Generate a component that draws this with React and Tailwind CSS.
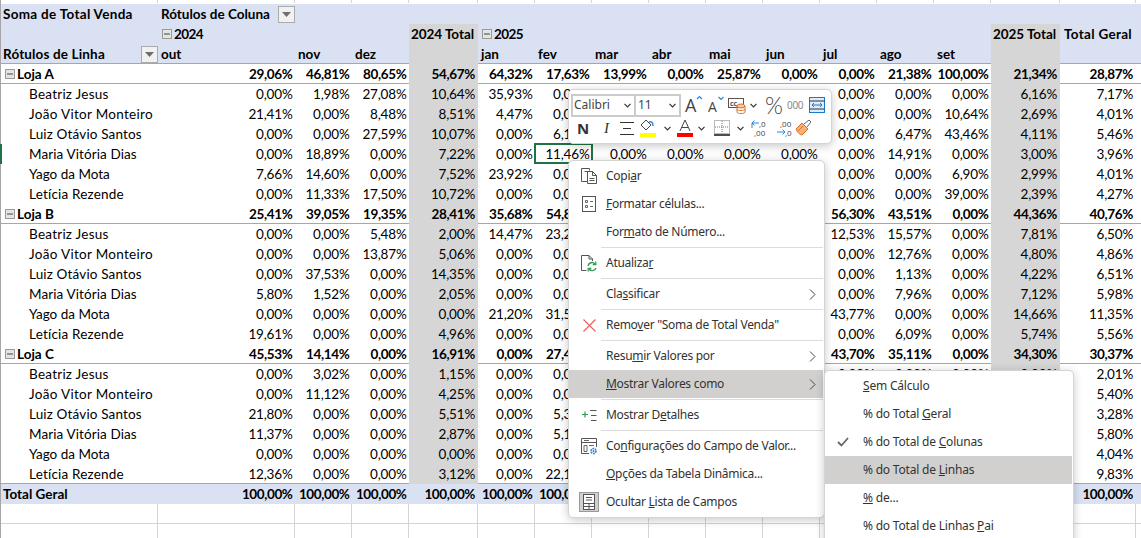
import React from "react";

const COLS = "grid grid-cols-[157px_137px_57px_57px_69px_57px_57px_57px_57px_57px_57px_57px_57px_57px_69px_76px]";
const TOTALS = [3, 13];

const TRACK = {
  "Beatriz Jesus": "tracking-[0.25px]",
  "João Vitor Monteiro": "tracking-[0.3px]",
  "Luiz Otávio Santos": "tracking-[0.15px]",
  "Maria Vitória Dias": "tracking-[0.1px]",
  "Yago da Mota": "tracking-[0px]",
  "Letícia Rezende": "tracking-[0.2px]",
};

const rows = [
  ["g", "Loja A", "29,06 46,81 80,65 54,67 64,32 17,63 13,99 0,00 25,87 0,00 0,00 21,38 100,00 21,34 28,87"],
  ["c", "Beatriz Jesus", "0,00 1,98 27,08 10,64 35,93 0,00 0,00 0,00 0,00 0,00 0,00 0,00 0,00 6,16 7,17"],
  ["c", "João Vitor Monteiro", "21,41 0,00 8,48 8,51 4,47 0,00 0,00 0,00 0,00 0,00 0,00 0,00 10,64 2,69 4,01"],
  ["c", "Luiz Otávio Santos", "0,00 0,00 27,59 10,07 0,00 6,17 0,00 0,00 0,00 0,00 0,00 6,47 43,46 4,11 5,46"],
  ["c", "Maria Vitória Dias", "0,00 18,89 0,00 7,22 0,00 11,46 0,00 0,00 0,00 0,00 0,00 14,91 0,00 3,00 3,96"],
  ["c", "Yago da Mota", "7,66 14,60 0,00 7,52 23,92 0,00 0,00 0,00 0,00 0,00 0,00 0,00 6,90 2,99 4,01"],
  ["c", "Letícia Rezende", "0,00 11,33 17,50 10,72 0,00 0,00 0,00 0,00 0,00 0,00 0,00 0,00 39,00 2,39 4,27"],
  ["g", "Loja B", "25,41 39,05 19,35 28,41 35,68 54,87 0,00 0,00 0,00 0,00 56,30 43,51 0,00 44,36 40,76"],
  ["c", "Beatriz Jesus", "0,00 0,00 5,48 2,00 14,47 23,25 0,00 0,00 0,00 0,00 12,53 15,57 0,00 7,81 6,50"],
  ["c", "João Vitor Monteiro", "0,00 0,00 13,87 5,06 0,00 0,00 0,00 0,00 0,00 0,00 0,00 12,76 0,00 4,80 4,86"],
  ["c", "Luiz Otávio Santos", "0,00 37,53 0,00 14,35 0,00 0,00 0,00 0,00 0,00 0,00 0,00 1,13 0,00 4,22 6,51"],
  ["c", "Maria Vitória Dias", "5,80 1,52 0,00 2,05 0,00 0,00 0,00 0,00 0,00 0,00 0,00 7,96 0,00 7,12 5,98"],
  ["c", "Yago da Mota", "0,00 0,00 0,00 0,00 21,20 31,50 0,00 0,00 0,00 0,00 43,77 0,00 0,00 14,66 11,35"],
  ["c", "Letícia Rezende", "19,61 0,00 0,00 4,96 0,00 0,00 0,00 0,00 0,00 0,00 0,00 6,09 0,00 5,74 5,56"],
  ["g", "Loja C", "45,53 14,14 0,00 16,91 0,00 27,41 0,00 0,00 0,00 0,00 43,70 35,11 0,00 34,30 30,37"],
  ["c", "Beatriz Jesus", "0,00 3,02 0,00 1,15 0,00 0,00 0,00 0,00 0,00 0,00 0,00 0,00 0,00 0,00 2,01"],
  ["c", "João Vitor Monteiro", "0,00 11,12 0,00 4,25 0,00 0,00 0,00 0,00 0,00 0,00 0,00 0,00 0,00 0,00 5,40"],
  ["c", "Luiz Otávio Santos", "21,80 0,00 0,00 5,51 0,00 5,30 0,00 0,00 0,00 0,00 0,00 0,00 0,00 0,00 3,28"],
  ["c", "Maria Vitória Dias", "11,37 0,00 0,00 2,87 0,00 5,10 0,00 0,00 0,00 0,00 0,00 0,00 0,00 0,00 5,80"],
  ["c", "Yago da Mota", "0,00 0,00 0,00 0,00 0,00 0,00 0,00 0,00 0,00 0,00 0,00 0,00 0,00 0,00 4,04"],
  ["c", "Letícia Rezende", "12,36 0,00 0,00 3,12 0,00 22,10 0,00 0,00 0,00 0,00 0,00 0,00 0,00 0,00 9,83"],
];

const Minus = () => (
  <svg width="10" height="10" viewBox="0 0 10 10" className="shrink-0">
    <rect x="0.5" y="0.5" width="9" height="9" fill="#e4e4e4" stroke="#9a9a9a" />
    <path d="M2 5H8" stroke="#444" />
  </svg>
);

const Filter = () => (
  <span className="flex h-[17px] w-[17px] items-center justify-center border border-[#ababab] bg-[#f1f1f1]">
    <svg width="9" height="5" viewBox="0 0 9 5"><path d="M0 0H9L4.5 5Z" fill="#6e6e6e" /></svg>
  </span>
);

function HeaderRows() {
  const months = ["jan", "fev", "mar", "abr", "mai", "jun", "jul", "ago", "set"];
  return (
    <div className="border-b border-[#8ea9db] bg-[#d9e1f2] font-bold">
      <div className={`${COLS} h-5 items-center`}>
        <div className="pl-[2px] tracking-[0.3px]">Soma de Total Venda</div>
        <div className="col-span-2 flex w-[137px] items-center justify-between pl-[3px]">
          <span>Rótulos de Coluna</span>
          <Filter />
        </div>
      </div>
      <div className={`${COLS} h-5 items-center`}>
        <div />
        <div className="col-span-3 flex items-center gap-[2px] pl-[4px]"><Minus /><span className="tracking-[-0.6px]">2024</span></div>
        <div className="flex h-full items-center justify-end bg-[#d6d6d6] pr-[4px] tracking-[-0.05px]">2024 Total</div>
        <div className="col-span-9 flex items-center gap-[2px] pl-[4px]"><Minus /><span className="tracking-[-0.6px]">2025</span></div>
        <div className="flex h-full items-center justify-end bg-[#d6d6d6] pr-[4px] tracking-[-0.05px]">2025 Total</div>
        <div className="flex items-center justify-end pr-[4px] tracking-[0.3px]">Total Geral</div>
      </div>
      <div className={`${COLS} h-[19px] items-center`}>
        <div className="flex items-center justify-between pl-[2px]"><span className="tracking-[0.15px]">Rótulos de Linha</span><Filter /></div>
        <div className="pl-[3px]">out</div>
        <div className="pl-[3px]">nov</div>
        <div className="pl-[3px]">dez</div>
        <div className="h-full bg-[#d6d6d6]" />
        {months.map((m) => <div key={m} className="pl-[3px]">{m}</div>)}
        <div className="h-full bg-[#d6d6d6]" />
        <div />
      </div>
    </div>
  );
}

function DataRow({ row, index }) {
  const [kind, name, text] = row;
  const group = kind === "g";
  const selected = index === 4;
  return (
    <div className={`${COLS} ${group ? "h-5 border-b border-[#8ea9db] font-bold" : "h-5"} ${selected ? "-ml-px" : ""} items-center`}>
      {group ? (
        <div className="flex items-center gap-[2px] pl-[4px]"><Minus /><span>{name}</span></div>
      ) : (
        <div className={`whitespace-nowrap pl-[28px] ${TRACK[name]}`}>{name}</div>
      )}
      {text.split(" ").map((v, i) => (
        <div
          key={i}
          className={`relative flex h-5 items-center justify-end ${group ? "tracking-[-0.35px]" : "tracking-[-0.2px]"} ${TOTALS.includes(i) ? "bg-[#d6d6d6]" : ""} ${i === 14 || i === 13 || i === 3 ? "pr-[3px]" : "pr-[2.5px]"}`}
        >
          {v}%
          {selected && i === 5 && <span className="absolute -inset-x-[1px] -top-[1px] -bottom-0 border-2 border-[#217346]" />}
        </div>
      ))}
    </div>
  );
}

const GridRow = ({ h }) => (
  <div className={`${COLS} ${h} border-b border-[#d4d4d4]`}>
    {Array.from({ length: 16 }, (_, i) => <div key={i} className="border-r border-[#d4d4d4]" />)}
  </div>
);

/* ---- menu icons ---- */
const IconCopy = () => (
  <svg width="17" height="16" viewBox="0 0 17 16" fill="none" stroke="#555">
    <path d="M6.5 13.5H.5V.5H8.5V2.5" />
    <path d="M3.5 3.5H11.5L15.5 7.5V15.5H6.5V3.5" fill="#fff" />
    <path d="M11.5 3.5V7.5H15.5M8.5 10.5H13.5M8.5 12.5H13.5" />
  </svg>
);
const IconFormat = () => (
  <svg width="14" height="16" viewBox="0 0 14 16" fill="none" stroke="#555">
    <rect x=".5" y=".5" width="13" height="15" />
    <path d="M3.5 4.5H5.5V6.5H3.5ZM3.5 9.5H5.5V11.5H3.5ZM8 5.5H11M8 10.5H11" stroke="#666" />
  </svg>
);
const IconRefresh = () => (
  <svg width="16" height="17" viewBox="0 0 16 17" fill="none">
    <path d="M5.5 15.5H.5V.5H8L11.5 4V6M8 .5V4H11.5" stroke="#555" />
    <path d="M7 11A4 4 0 0 1 14 9M15 13A4 4 0 0 1 8 14" stroke="#2e9a55" strokeWidth="1.4" />
    <path d="M14.8 6.5V9.6H11.7M7.2 16.4V13.3H10.3" stroke="#2e9a55" strokeWidth="1.2" />
  </svg>
);
const IconX = () => (
  <svg width="13" height="13" viewBox="0 0 13 13" fill="none" stroke="#e8615f" strokeWidth="1.2">
    <path d="M.5 .5L12.5 12.5M12.5 .5L.5 12.5" />
  </svg>
);
const IconDetails = () => (
  <svg width="15" height="11" viewBox="0 0 15 11" fill="none">
    <path d="M0 4.5H6M3 1.5V7.5" stroke="#2e9a55" strokeWidth="1.2" />
    <path d="M8 .5H14.5M9 5.5H14.5M9 10.5H14.5" stroke="#555" />
  </svg>
);
const IconConfig = () => (
  <svg width="17" height="17" viewBox="0 0 17 17" fill="none">
    <path d="M.5 .5H15.5V9M8 15.5H.5V.5M.5 4.5H15.5" stroke="#555" />
    <path d="M3 2.5H8M3 7.5H6V13.5H3ZM8 7.5H13" stroke="#666" />
    <circle cx="12.5" cy="13" r="2.5" stroke="#2b7cd3" strokeWidth="1.6" strokeDasharray="1.8 .8" />
    <circle cx="12.5" cy="13" r="1" fill="#2b7cd3" />
  </svg>
);
const IconFields = () => (
  <span className="flex h-[20px] w-[20px] items-center justify-center border border-[#9a9a9a] bg-[#d2d0ce]">
    <svg width="12" height="16" viewBox="0 0 12 16" fill="none" stroke="#555">
      <rect x=".5" y=".5" width="11" height="15" fill="#fff" />
      <path d="M3 3.5H9M3 6H9M.5 9.5H11.5M.5 12.5H11.5M6 9.5V15.5" />
    </svg>
  </span>
);
const Chevron = () => (
  <svg width="7" height="11" viewBox="0 0 7 11" fill="none" stroke="#444" className="ml-auto mr-[7px] shrink-0">
    <path d="M1 .5L6 5.5L1 10.5" />
  </svg>
);

function Item({ icon, arrow, active, children }) {
  return (
    <div className={`flex h-7 items-center ${active ? "bg-[#d2d0ce]" : ""}`}>
      <span className="flex w-[37px] shrink-0 items-center justify-center pl-[3px]">{icon}</span>
      <span className="whitespace-nowrap">{children}</span>
      {arrow && <Chevron />}
    </div>
  );
}
const Sep = () => (
  <div className="flex h-[3px] items-center pl-[32px]"><div className="h-px w-full bg-[#dcdcdc]" /></div>
);

function SubItem({ active, check, children }) {
  return (
    <div className={`flex h-7 items-center ${active ? "bg-[#d2d0ce]" : ""}`}>
      <span className="flex w-[38px] shrink-0 items-center justify-center pr-[2px]">
        {check && (
          <svg width="12" height="10" viewBox="0 0 12 10" fill="none" stroke="#666" strokeWidth="1.8"><path d="M1 5L4.5 8.5L11 1" /></svg>
        )}
      </span>
      <span className="whitespace-nowrap">{children}</span>
    </div>
  );
}

const Chev = ({ cls = "" }) => (
  <svg width="7" height="5" viewBox="0 0 7 5" fill="none" stroke="#333" strokeWidth="1.2" className={`shrink-0 ${cls}`}>
    <path d="M.5 .8L3.5 3.8L6.5 .8" />
  </svg>
);

function Toolbar() {
  return (
    <div className="absolute left-[568px] top-[89px] z-30 h-[55px] w-[264px] rounded-[5px] border border-[#d4d4d4] bg-white pl-[2px] pt-[3px] font-['Noto_Sans',sans-serif] text-[12px] text-[#444] shadow-[0_2px_10px_rgba(0,0,0,0.22)]">
      <div className="flex h-[24px] items-center">
        <div className="flex h-[23px] w-[65px] items-center justify-between border-2 border-[#cbcbcb] pl-[1px] pr-[3px]">
          <span>Calibri</span><Chev />
        </div>
        <div className="flex h-[23px] w-[45px] items-center justify-between border-2 border-l-0 border-[#cbcbcb] pl-[2px] pr-[3px]">
          <span>11</span><Chev />
        </div>
        <svg width="19" height="20" viewBox="0 0 19 20" className="ml-[3px]" fill="none">
          <text x="1" y="17" fontSize="18" fill="#444" fontFamily="Open Sans">A</text>
          <path d="M13 4L15.5 1.5L18 4" stroke="#2b88d8" strokeWidth="1.2" />
        </svg>
        <svg width="16" height="20" viewBox="0 0 16 20" className="ml-[5px]" fill="none">
          <text x="0" y="17" fontSize="14" fill="#444" fontFamily="Open Sans">A</text>
          <path d="M10.5 2L13 4.5L15.5 2" stroke="#2b88d8" strokeWidth="1.2" />
        </svg>
        <svg width="18" height="18" viewBox="0 0 18 18" className="ml-[4px]" fill="none">
          <rect x=".5" y="2.5" width="15" height="9" stroke="#555" fill="#fff" />
          <text x="2" y="10" fontSize="7" fontWeight="700" fill="#555" fontFamily="Open Sans">cc</text>
          <ellipse cx="13" cy="10" rx="4" ry="2" fill="#f6c9a3" stroke="#d9702a" />
          <path d="M9 10V16C9 18 17 18 17 16V10M9 13C9 15 17 15 17 13" stroke="#d9702a" fill="none" />
        </svg>
        <Chev cls="ml-[4px]" />
        <span className="ml-[8px] w-[18px] text-center font-['Lato',sans-serif] text-[23px] font-light leading-none text-[#444]">%</span>
        <span className="ml-[4px] w-[16px] text-center text-[10px] tracking-[-0.3px] text-[#8a8a8a]">000</span>
        <svg width="16" height="16" viewBox="0 0 16 16" className="ml-[6px]" fill="none">
          <rect x=".5" y=".5" width="15" height="15" fill="#dcecf9" stroke="#1e78c8" />
          <path d="M.5 4H15.5M.5 12H15.5" stroke="#333" />
          <path d="M3 8H13M5 6L3 8L5 10M11 6L13 8L11 10" stroke="#1e78c8" />
        </svg>
      </div>
      <div className="flex h-[22px] items-center">
        <span className="ml-[6px] w-[12px] text-[15px] font-bold leading-none text-[#333]">N</span>
        <span className="ml-[15px] w-[8px] font-['Liberation_Serif',serif] text-[15px] italic leading-none text-[#333]">I</span>
        <svg width="14" height="13" viewBox="0 0 14 13" className="ml-[8px]" fill="none" stroke="#333"><path d="M0 .5H14M3 6.5H11M0 12.5H14" /></svg>
        <svg width="16" height="18" viewBox="0 0 16 18" className="ml-[6px]" fill="none">
          <path d="M6 1L1 6L6 11L11 6Z" stroke="#444" fill="#fff" />
          <path d="M9 3C12 2 13 4 13 7" stroke="#2b88d8" strokeWidth="1.4" />
          <rect x="0" y="14" width="16" height="4" fill="#ffff00" />
        </svg>
        <Chev cls="ml-[8px]" />
        <svg width="16" height="18" viewBox="0 0 16 18" className="ml-[6px]" fill="none">
          <path d="M3 12L8 1L13 12M5 8.5H11" stroke="#444" />
          <rect x="0" y="14" width="16" height="4" fill="#ff0000" />
        </svg>
        <Chev cls="ml-[5px]" />
        <svg width="16" height="16" viewBox="0 0 16 16" className="ml-[9px]" fill="none">
          <rect x=".5" y=".5" width="15" height="13" stroke="#777" strokeDasharray="1 1" />
          <path d="M8 1V13M1 7H15" stroke="#777" strokeDasharray="1 1" />
          <path d="M0 15H16" stroke="#222" strokeWidth="1.6" />
        </svg>
        <Chev cls="ml-[7px]" />
        <svg width="17" height="18" viewBox="0 0 17 18" className="ml-[7px]" fill="none">
          <text x="8" y="8" fontSize="8" fill="#444" fontFamily="Open Sans">,0</text>
          <text x="3" y="17" fontSize="8" fill="#444" fontFamily="Open Sans">,00</text>
          <path d="M8 4H1M3.5 1.5L1 4L3.5 6.5M1 4V9" stroke="#2b88d8" />
        </svg>
        <svg width="16" height="18" viewBox="0 0 16 18" className="ml-[9px]" fill="none">
          <text x="3" y="8" fontSize="8" fill="#444" fontFamily="Open Sans">,00</text>
          <text x="8" y="17" fontSize="8" fill="#444" fontFamily="Open Sans">,0</text>
          <path d="M0 13H8M5.5 10.5L8 13L5.5 15.5" stroke="#2b88d8" />
        </svg>
        <svg width="16" height="16" viewBox="0 0 16 16" className="ml-[2px]" fill="none">
          <path d="M1 9L7 3L13 9L7 15C5 15 2 12 1 9Z" fill="#f2b27a" stroke="#d9702a" />
          <path d="M9 4L14 0L16 2L12 7" fill="#fff" stroke="#666" />
          <path d="M3 11L8 6" stroke="#d9702a" />
        </svg>
      </div>
    </div>
  );
}

function MainMenu() {
  return (
    <div className="absolute left-[568px] top-[160px] z-20 h-[358px] w-[257px] rounded-[5px] border border-[#d4d4d4] bg-white pt-[1px] pr-[1px] font-['Noto_Sans',sans-serif] text-[12px] tracking-[-0.28px] text-[#333] shadow-[0_2px_10px_rgba(0,0,0,0.22)]">
      <Item icon={<IconCopy />}>Copi<u>a</u>r</Item>
      <Item icon={<IconFormat />}><u>F</u>ormatar células...</Item>
      <Item>For<u>m</u>ato de Número...</Item>
      <Sep />
      <Item icon={<IconRefresh />}>Atualiza<u>r</u></Item>
      <Sep />
      <Item arrow>Cla<u>s</u>sificar</Item>
      <Sep />
      <Item icon={<IconX />}>Remo<u>v</u>er "Soma de Total Venda"</Item>
      <Sep />
      <Item arrow>Resu<u>m</u>ir Valores por</Item>
      <Item arrow active><u>M</u>ostrar Valores como</Item>
      <Sep />
      <Item icon={<IconDetails />}>Mostrar D<u>e</u>talhes</Item>
      <Sep />
      <Item icon={<IconConfig />}>Co<u>n</u>figurações do Campo de Valor...</Item>
      <Item><u>O</u>pções da Tabela Dinâmica...</Item>
      <Item icon={<IconFields />}>Ocultar <u>L</u>ista de Campos</Item>
    </div>
  );
}

function SubMenu() {
  return (
    <div className="absolute left-[824px] top-[370px] z-30 h-[200px] w-[250px] rounded-[5px] border border-[#d4d4d4] bg-white pt-[1px] pr-[1px] font-['Noto_Sans',sans-serif] text-[12px] tracking-[-0.2px] text-[#333] shadow-[0_2px_10px_rgba(0,0,0,0.22)]">
      <SubItem><u>S</u>em Cálculo</SubItem>
      <SubItem>% do Total <u>G</u>eral</SubItem>
      <SubItem check>% do Total de <u>C</u>olunas</SubItem>
      <SubItem active>% do Total de <u>L</u>inhas</SubItem>
      <SubItem><u>%</u> de...</SubItem>
      <SubItem>% do Total de Linhas <u>P</u>ai</SubItem>
    </div>
  );
}

export default function App() {
  return (
    <div className="relative h-[538px] w-[1141px] overflow-hidden bg-white font-['Lato',sans-serif] text-[13.5px] text-black">
      <div className="border-l border-[#a6a6a6]">
        <div className={`${COLS} h-[3px]`}>
          {Array.from({ length: 16 }, (_, i) => <div key={i} className="border-r border-[#d4d4d4]" />)}
        </div>
        <div className="pt-[1px]">
          <HeaderRows />
          {rows.map((r, i) => (
            <div key={i} className={i === 4 ? "-ml-px border-l-2 border-[#217346]" : ""}>
              <DataRow row={r} index={i} />
            </div>
          ))}
          <div className="border-t border-[#8ea9db] -mt-px" />
          <div className={`${COLS} h-5 items-center bg-[#d9e1f2] font-bold tracking-[-0.4px]`}>
            <div className="pl-[2px] tracking-[0px]">Total Geral</div>
            {Array.from({ length: 15 }, (_, i) => (
              <div key={i} className={`text-right ${i === 14 || i === 3 || i === 13 ? "pr-[3px]" : "pr-[2.5px]"}`}>100,00%</div>
            ))}
          </div>
          <GridRow h="h-5" />
          <GridRow h="h-5" />
        </div>
      </div>
      <Toolbar />
      <MainMenu />
      <SubMenu />
    </div>
  );
}
